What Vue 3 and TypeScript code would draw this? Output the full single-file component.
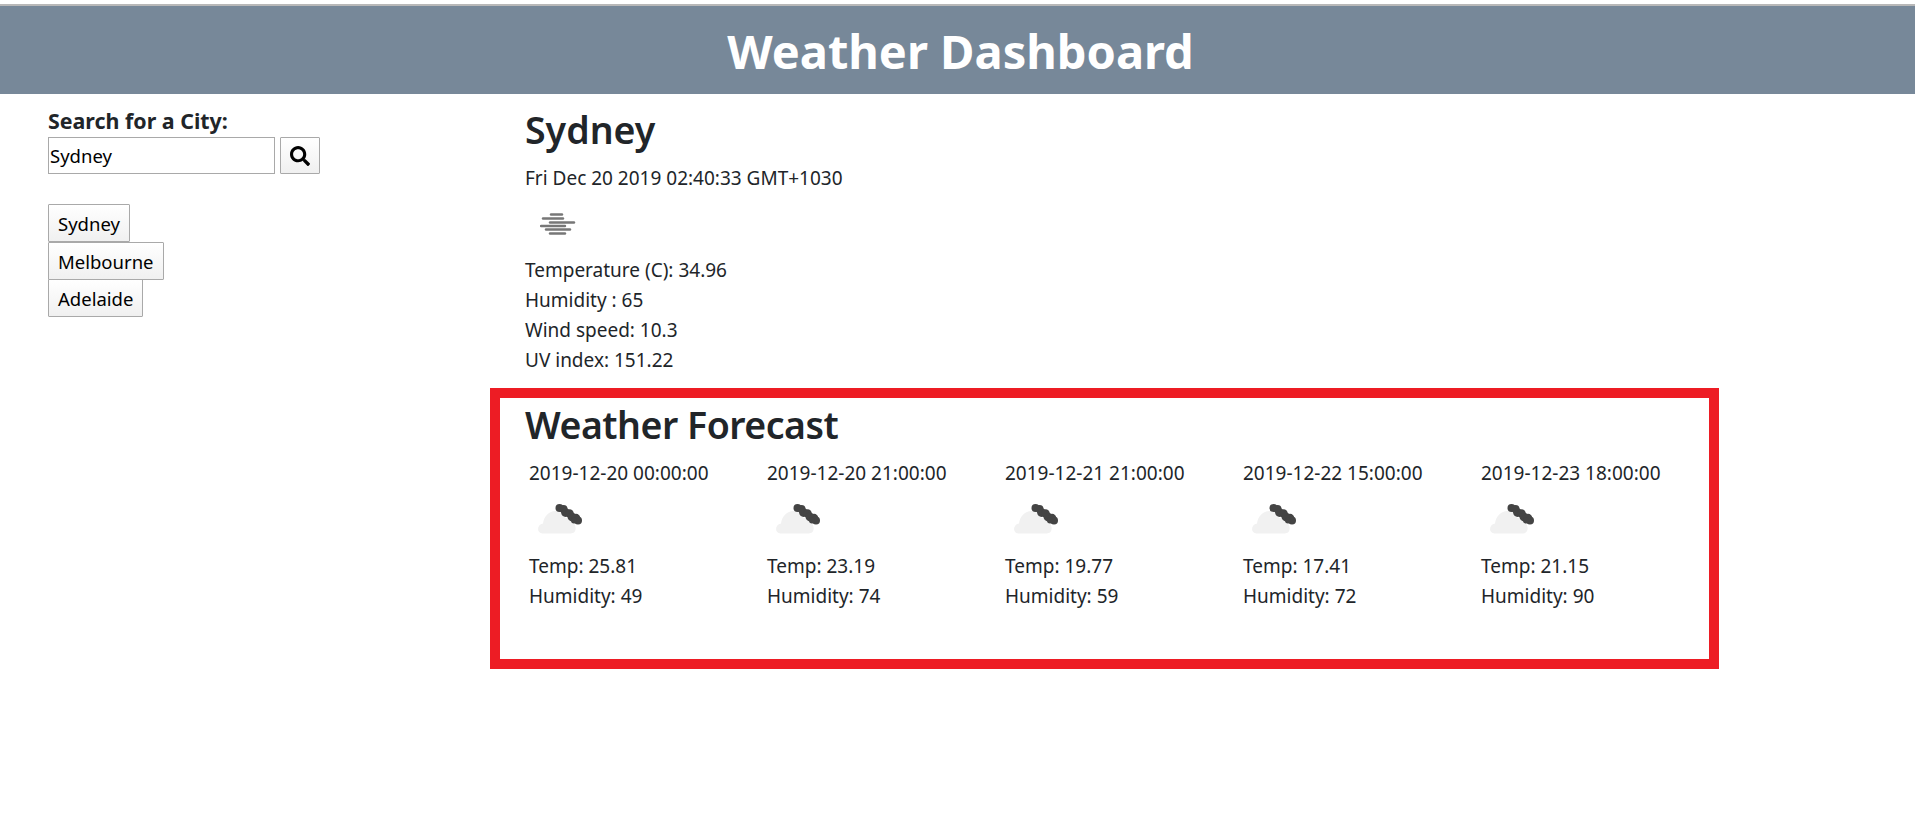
<script setup lang="ts">
interface Forecast { date: string; temp: string; humidity: number }
const cities: string[] = ['Sydney', 'Melbourne', 'Adelaide']
const current: string[] = ['Temperature (C): 34.96', 'Humidity : 65', 'Wind speed: 10.3', 'UV index: 151.22']
const forecasts: Forecast[] = [
  { date: '2019-12-20 00:00:00', temp: '25.81', humidity: 49 },
  { date: '2019-12-20 21:00:00', temp: '23.19', humidity: 74 },
  { date: '2019-12-21 21:00:00', temp: '19.77', humidity: 59 },
  { date: '2019-12-22 15:00:00', temp: '17.41', humidity: 72 },
  { date: '2019-12-23 18:00:00', temp: '21.15', humidity: 90 }
]
</script>

<template>
  <div class="page">
    <header class="banner"><h1>Weather Dashboard</h1></header>
    <div class="content">
      <aside class="sidebar">
        <label class="search-label" for="city">Search for a City:</label>
        <div class="search-row">
          <input id="city" class="search-input" type="text" value="Sydney" />
          <button class="btn search-btn" type="button" aria-label="Search">
            <svg viewBox="0 0 512 512" width="20" height="20">
              <path fill="#000" d="M505 442.7L405.3 343c-4.5-4.5-10.6-7-17-7H372c27.6-35.3 44-79.7 44-128C416 93.1 322.9 0 208 0S0 93.1 0 208s93.1 208 208 208c48.3 0 92.7-16.4 128-44v16.3c0 6.4 2.5 12.5 7 17l99.7 99.7c9.4 9.4 24.6 9.4 33.9 0l28.3-28.3c9.4-9.4 9.4-24.6.1-34zM208 336c-70.7 0-128-57.2-128-128 0-70.7 57.2-128 128-128 70.7 0 128 57.2 128 128 0 70.7-57.2 128-128 128z" />
            </svg>
          </button>
        </div>
        <div class="history">
          <button v-for="city in cities" :key="city" class="btn city-btn" type="button">{{ city }}</button>
        </div>
      </aside>
      <main class="main">
        <section class="today">
          <h2>Sydney</h2>
          <p class="line">Fri Dec 20 2019 02:40:33 GMT+1030</p>
          <div class="icon-slot">
            <svg class="fog" viewBox="0 0 36 22" width="36" height="22">
              <g stroke="#777" stroke-width="2.400" stroke-linecap="round">
                <path d="M11 1.500h11" /><path d="M3 5.500h20" /><path d="M10 9.500h24" />
                <path d="M1 13h24" /><path d="M6 16.500h24" /><path d="M10 20.500h15" />
              </g>
            </svg>
          </div>
          <p v-for="row in current" :key="row" class="line">{{ row }}</p>
        </section>
        <section class="forecast">
          <h2>Weather Forecast</h2>
          <div class="cards">
            <article v-for="f in forecasts" :key="f.date" class="card">
              <p class="line">{{ f.date }}</p>
              <div class="icon-slot">
                <svg class="cloud" viewBox="0 0 45 30" width="46" height="30">
                  <path fill="#f1f1f1" d="M5 29.500c-6 0-6-9 .5-10 1-8 7-13 13-12.500 5 .5 8 4 9 7 5 0 9 2 10 7.500 2 5-1 8-4 8z" />
                  <g fill="#444">
                    <circle cx="22" cy="4" r="4" /><circle cx="26" cy="5" r="4" />
                    <circle cx="28" cy="8.500" r="4.400" /><circle cx="32" cy="9.500" r="4.200" />
                    <circle cx="34.500" cy="13" r="4.400" /><circle cx="38.500" cy="14" r="4.200" />
                    <circle cx="40.500" cy="16.500" r="4" /><circle cx="36.500" cy="16.500" r="3" />
                  </g>
                </svg>
              </div>
              <p class="line">Temp: {{ f.temp }}</p>
              <p class="line">Humidity: {{ f.humidity }}</p>
            </article>
          </div>
        </section>
      </main>
    </div>
  </div>
</template>

<style>
html, body { margin: 0; background: #fff; }
</style>

<style scoped>
.page {
  font-family: "Noto Sans", "Open Sans", sans-serif;
  font-size: 19px;
  line-height: 30px;
  color: #212529;
  padding-top: 4px;
  min-height: 814px;
  background: #fff;
}
.banner {
  height: 90px;
  box-sizing: border-box;
  background: #778899;
  border-top: 2px solid #b8b8b8;
  display: flex;
  align-items: center;
  justify-content: center;
  padding: 2px 0 0 6px;
}
.banner h1 {
  margin: 0;
  color: #fff;
  font-size: 47px;
  font-weight: 700;
  line-height: 56px;
}
.content { display: flex; }
.sidebar {
  width: 490px;
  box-sizing: border-box;
  padding: 11px 0 0 48px;
}
.search-label {
  display: block;
  font-weight: 700;
  font-size: 21.4px;
  line-height: 32px;
}
.search-row { display: flex; gap: 5px; }
.search-input {
  width: 227px;
  height: 37px;
  box-sizing: border-box;
  border: 1px solid #a9a9a9;
  padding: 0 1px;
  font: inherit;
  font-size: 18.5px;
  color: #000;
  outline: none;
}
.btn {
  box-sizing: border-box;
  border: 1px solid #a9a9a9;
  border-radius: 1px;
  background: linear-gradient(#fff, #f0f0f0);
  color: #000;
  font: inherit;
  font-size: 18.5px;
  padding: 0;
  display: flex;
  align-items: center;
  justify-content: center;
}
.search-btn { width: 40px; height: 37px; }
.history {
  margin-top: 30px;
  display: flex;
  flex-direction: column;
  align-items: flex-start;
}
.city-btn { height: 38px; padding: 2px 9px 0; margin-bottom: -0.500px; }
.main { width: 1229px; }
.today { padding: 12px 0 0 35px; }
h2 {
  margin: 0;
  font-size: 37.5px;
  font-weight: 600;
  line-height: 48px;
}
.line { margin: 0; white-space: nowrap; }
.today h2 { margin-bottom: 9px; }
.icon-slot { height: 62px; position: relative; }
.fog { position: absolute; left: 15px; top: 20px; }
.cloud { position: absolute; left: 8px; top: 16px; }
.forecast {
  margin-top: 13px;
  height: 281px;
  box-sizing: border-box;
  border: 10px solid #ed1c24;
  padding: 3px 0 0 25px;
}
.forecast h2 { margin-bottom: 9px; letter-spacing: -0.5px; }
.forecast .icon-slot { height: 63px; }
.cards { display: flex; }
.card { flex: none; width: 238px; padding-left: 4px; box-sizing: border-box; }
</style>
